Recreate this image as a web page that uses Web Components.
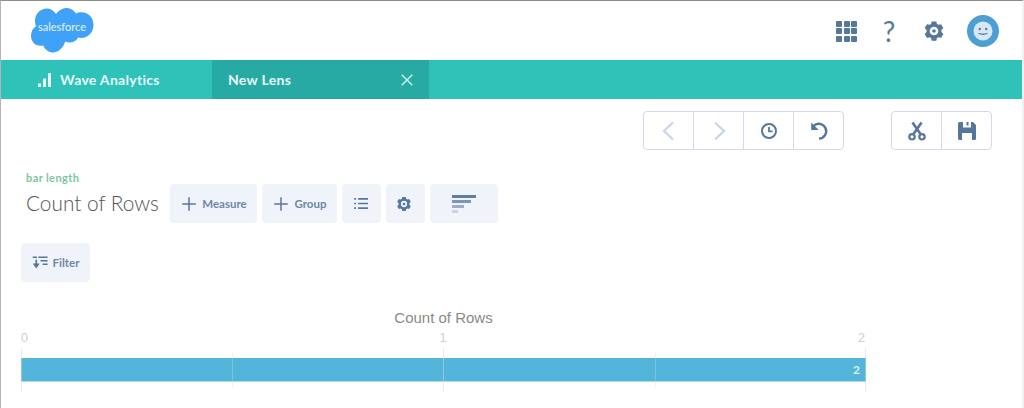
<!DOCTYPE html>
<html>
<head>
<meta charset="utf-8">
<title>New Lens</title>
<style>
html, body { margin: 0; padding: 0; background: #fff; }
body { font-family: "Lato", "Open Sans", sans-serif; }
</style>
</head>
<body>
<lens-app></lens-app>

<script>
const ICONS = {
    back: '<path d="M16 3.500 7 12l9 8.500" fill="none" stroke="currentColor" stroke-width="2.200"/>',
    next: '<path d="M8 3.500 17 12l-9 8.500" fill="none" stroke="currentColor" stroke-width="2.200"/>',
    clock: '<circle cx="12" cy="12" r="7" fill="none" stroke="currentColor" stroke-width="2"/><path d="M12 8v4.400h3.600" fill="none" stroke="currentColor" stroke-width="1.800"/>',
    undo: '<path d="M6.500 7A7.400 7.400 0 1 1 12 19.600" fill="none" stroke="currentColor" stroke-width="2.400"/><path d="M4.200 3.500v7.500h7.500z" fill="currentColor"/>',
    cut: '<path d="M7.500 3.500l8 11.500M16.500 3.500l-8 11.500" fill="none" stroke="currentColor" stroke-width="2.600"/><circle cx="7" cy="17.800" r="2.700" fill="none" stroke="currentColor" stroke-width="2.200"/><circle cx="17" cy="17.800" r="2.700" fill="none" stroke="currentColor" stroke-width="2.200"/>',
    save: '<path fill-rule="evenodd" fill="currentColor" d="M4.500 3H18l3 3v13.500a1.500 1.500 0 0 1-1.500 1.500h-15A1.500 1.500 0 0 1 3 19.500v-15A1.500 1.500 0 0 1 4.500 3zM8 3v5.500h8V3h-2.500v3.500h-2V3zM7 14v7h10v-7z"/>',
    plus: '<path d="M12 3v18M3 12h18" fill="none" stroke="currentColor" stroke-width="2"/>',
    list: '<path d="M10 5.500h14M10 12h14M10 18.500h14" fill="none" stroke="currentColor" stroke-width="2.400"/><path d="M4.500 5.500h2.600M4.500 12h2.600M4.500 18.500h2.600" fill="none" stroke="currentColor" stroke-width="2.400"/>',
    gear: '<path fill-rule="evenodd" fill="currentColor" d="M9.500 1.500h5l.700 2.800 1.700 1 2.800-.800 2.500 4.300-2.100 2v2.400l2.100 2-2.500 4.300-2.800-.800-1.700 1-.700 2.800h-5l-.700-2.800-1.700-1-2.800.800-2.500-4.300 2.100-2v-2.400l-2.100-2 2.500-4.300 2.800.800 1.700-1zM12 7.300a4.700 4.700 0 1 0 0 9.400 4.700 4.700 0 0 0 0-9.400z"/><circle cx="12" cy="12" r="2" fill="currentColor"/>',
    filter: '<path d="M9 4.500h13M12 9.500h10M15 14.500h7" fill="none" stroke="currentColor" stroke-width="2.200"/><path d="M6 8v9" fill="none" stroke="currentColor" stroke-width="2.400"/><path d="M1 13.500h10L6 20.500zM1 3.500h6v2H1z" fill="currentColor"/>'
};

function icon(name, size) {
    return `<svg width="${size}" height="${size}" viewBox="0 0 24 24" aria-hidden="true">${ICONS[name]}</svg>`;
}

// white bar with logo and the round icons on the right
class TopBar extends HTMLElement {
    constructor() {
        super();
        this.attachShadow({ mode: 'open' });
        let dots = '';
        for (let i = 0; i < 9; i++) dots += '<i></i>';
        this.shadowRoot.innerHTML = `
        <style>
            :host { display: flex; justify-content: space-between; height: 59px; background: #fff; color: #56779c; }
            .logo { position: relative; width: 64px; height: 46px; margin: 6px 0 0 29px; color: #e6f3fe; }
            .logo svg { display: block; }
            .logo span { position: absolute; left: 0; right: 0; top: 13px; text-align: center; font: 11px "Lato", sans-serif; }
            .tools { display: flex; align-items: center; margin-right: 23px; }
            .apps { display: grid; grid-template-columns: repeat(3, 6px); grid-auto-rows: 6px; gap: 1.500px; margin-top: 1px; }
            .apps i { background: #56779c; border-radius: 1px; }
            .help { font: 28px/30px "Lato", sans-serif; width: 16px; text-align: center; margin: 0 26px 0 24px; }
            .avatar { width: 32px; height: 32px; margin-left: 22px; }
            svg { display: block; }
        </style>
        <div class="logo">
            <svg width="64" height="46" viewBox="0 0 64 46"><path fill="#3fa2f7" d="M26 7c3-4 7-6.500 11-6 4 .300 7 2.500 9 5.500 2-1.200 4-1.500 6.500-1.200C59 6 63.500 11 63.500 18c0 7-5.500 13-12.500 13-1 0-2-.100-2.800-.400-1.800 3.300-5 5-8.700 5-1.500 0-3-.300-4.200-1C33.800 39 29.700 45.500 23.500 45.500c-4.800 0-8.500-2.700-10.300-7-1 .200-2 .300-3 .300C4.500 38.800 1 34 1 28.500c0-4 2-7.500 5-9.300C5.300 17.500 5 15.700 5 14 5 6.800 10.500 1.500 17 1.500c3.500 0 6.800 2 9 5.500z"/></svg>
            <span>salesforce</span>
        </div>
        <div class="tools">
            <div class="apps">${dots}</div>
            <div class="help">?</div>
            ${icon('gear', 22)}
            <svg class="avatar" viewBox="0 0 32 32"><circle cx="16" cy="16" r="16" fill="#4d9fd3"/><circle cx="16" cy="16" r="9.500" fill="#d5e8f4"/><circle cx="12.800" cy="14" r="1.200" fill="#56779c"/><circle cx="19.200" cy="14" r="1.200" fill="#56779c"/><path d="M11.500 18.500q4.500 1.500 9 0" fill="none" stroke="#56779c" stroke-width="1.300"/></svg>
        </div>`;
    }
}

// teal strip, app name and the open tab
class TabBar extends HTMLElement {
    constructor() {
        super();
        this.attachShadow({ mode: 'open' });
        this.shadowRoot.innerHTML = `
        <style>
            :host { display: flex; height: 39px; background: #2ec2b8; color: #e8f8f6; font: 700 14px "Lato", sans-serif; letter-spacing: .3px; }
            .app { display: flex; align-items: center; width: 211px; box-sizing: border-box; padding-left: 37px; gap: 9px; }
            .tab { display: flex; align-items: center; justify-content: space-between; width: 217px; box-sizing: border-box; padding: 0 16px 0 16px; background: #27aaa4; }
            svg { display: block; }
        </style>
        <div class="app">
            <svg width="13" height="14" viewBox="0 0 13 14"><path d="M0 10.500h3V14H0zM5 5.500h3V14H5zM10 0h3v14h-3z" fill="#e8f8f6"/></svg>
            <span>Wave Analytics</span>
        </div>
        <div class="tab">
            <span>New Lens</span>
            <svg width="12" height="12" viewBox="0 0 12 12"><path d="M.700.700l10.600 10.600M11.300.700.700 11.300" stroke="#c3ebe7" stroke-width="1.600"/></svg>
        </div>`;
    }
}

// outlined segmented group, icons given as a list, "dim:" marks disabled
class ButtonGroup extends HTMLElement {
    constructor() {
        super();
        this.attachShadow({ mode: 'open' });
    }

    connectedCallback() {
        const cells = this.getAttribute('icons').split(' ').map(n => {
            const dim = n.startsWith('dim:');
            return `<div class="cell${dim ? ' dim' : ''}">${icon(n.replace('dim:', ''), 24)}</div>`;
        }).join('');
        this.shadowRoot.innerHTML = `
        <style>
            :host { display: flex; height: 39px; box-sizing: border-box; border: 1px solid #cfdbe8; border-radius: 4px; color: #56779c; background: #fff; }
            .cell { width: 49px; display: flex; align-items: center; justify-content: center; }
            .cell + .cell { border-left: 1px solid #cfdbe8; width: 49px; }
            .dim { color: #c7d5e5; }
            svg { display: block; }
        </style>
        ${cells}`;
    }
}

// pale filled button with optional icon and label
class LensButton extends HTMLElement {
    constructor() {
        super();
        this.attachShadow({ mode: 'open' });
    }

    connectedCallback() {
        const size = this.getAttribute('size') || 18;
        const name = this.getAttribute('icon');
        this.shadowRoot.innerHTML = `
        <style>
            :host { display: flex; align-items: center; justify-content: center; height: 39px; box-sizing: border-box; background: #f0f4fa; border-radius: 4px; color: #56779c; gap: 4px; font: 700 11.500px "Lato", sans-serif; }
            span { color: #6f87a8; }
            svg { display: block; }
        </style>
        ${name ? icon(name, size) : ''}<slot name="art"></slot><span><slot></slot></span>`;
    }
}

class SortArt extends HTMLElement {
    constructor() {
        super();
        this.attachShadow({ mode: 'open' });
        this.shadowRoot.innerHTML = `
        <style>
            :host { display: grid; grid-auto-rows: 3px; gap: 2px; width: 24px; margin-left: 4px; }
            i { display: block; }
        </style>
        <i style="width:24px;background:#5f7fa3"></i>
        <i style="width:19px;background:#7b97b8"></i>
        <i style="width:12px;background:#9bb0c8"></i>
        <i style="width:6px;background:#c8d4e2"></i>`;
    }
}

// the horizontal bar chart with its axis on top
class BarChart extends HTMLElement {
    constructor() {
        super();
        this.attachShadow({ mode: 'open' });
        this.shadowRoot.innerHTML = `
        <style>
            :host { display: block; width: 845px; font-family: "Liberation Sans", sans-serif; }
            .title { text-align: center; font-size: 15px; line-height: 16px; color: #8a8a8a; }
            .axis { display: flex; justify-content: space-between; margin-top: 5px; height: 14px; padding: 0 1px 0 0; font: 12.500px/14px "Liberation Sans", sans-serif; color: #cfcfcf; }
            .plot { position: relative; height: 44px; margin-top: 3px; padding-top: 10px; box-sizing: border-box; }
            .bar { height: 24px; box-sizing: border-box; background: #52b5d9; border-bottom: 1px solid #a6dcee; color: #dcf0f7; font: 700 12px/23px "Lato", sans-serif; text-align: right; padding-right: 6px; }
            .tick { position: absolute; width: 1px; top: 0; bottom: 0; background: rgba(205,218,226,.5); }
            .minor { top: 5px; bottom: 5px; background: rgba(205,218,226,.35); }
        </style>
        <div class="title">Count of Rows</div>
        <div class="axis"><span>0</span><span>1</span><span>2</span></div>
        <div class="plot">
            <div class="bar">2</div>
            <div class="tick" style="left:0"></div>
            <div class="tick minor" style="left:211px"></div>
            <div class="tick" style="left:422px"></div>
            <div class="tick minor" style="left:634px"></div>
            <div class="tick" style="left:844px"></div>
        </div>`;
    }
}

class LensApp extends HTMLElement {
    constructor() {
        super();
        this.attachShadow({ mode: 'open' });
        this.shadowRoot.innerHTML = `
        <style>
            :host { display: block; width: 1024px; height: 408px; box-sizing: border-box; border-top: 1px solid #8c8c8c; border-left: 1px solid #b5b5b5; border-right: 2px solid #f1f1f1; overflow: hidden; background: #fff; }
            .actions { display: flex; justify-content: flex-end; gap: 47px; margin: 12px 30px 0 0; }
            .fields { display: grid; grid-template-columns: 149px auto; margin: 21px 0 0 20px; }
            .head { padding-left: 5px; }
            .head small { display: block; font: 700 11px/13px "Lato", sans-serif; color: #7cc79d; letter-spacing: .4px; }
            .head div { font: 300 20.800px/24px "Lato", sans-serif; color: #555; margin-top: 7px; white-space: nowrap; }
            .row { display: flex; gap: 5px; margin-top: 13px; }
            .filter { display: flex; margin: 20px 0 0 20px; }
            bar-chart { margin-top: 28px; margin-left: 20px; }
        </style>
        <top-bar></top-bar>
        <tab-bar></tab-bar>
        <div class="actions">
            <button-group icons="dim:back dim:next clock undo"></button-group>
            <button-group icons="cut save"></button-group>
        </div>
        <div class="fields">
            <div class="head"><small>bar length</small><div>Count of Rows</div></div>
            <div class="row">
                <lens-button icon="plus" style="width:87px">Measure</lens-button>
                <lens-button icon="plus" style="width:75px">Group</lens-button>
                <lens-button icon="list" size="17" style="width:39px"></lens-button>
                <lens-button icon="gear" size="16" style="width:39px"></lens-button>
                <lens-button style="width:68px"><sort-art slot="art"></sort-art></lens-button>
            </div>
        </div>
        <div class="filter"><lens-button icon="filter" size="17" style="width:69px">Filter</lens-button></div>
        <bar-chart></bar-chart>`;
    }
}

customElements.define('top-bar', TopBar);
customElements.define('tab-bar', TabBar);
customElements.define('button-group', ButtonGroup);
customElements.define('lens-button', LensButton);
customElements.define('sort-art', SortArt);
customElements.define('bar-chart', BarChart);
customElements.define('lens-app', LensApp);
</script>
</body>
</html>
